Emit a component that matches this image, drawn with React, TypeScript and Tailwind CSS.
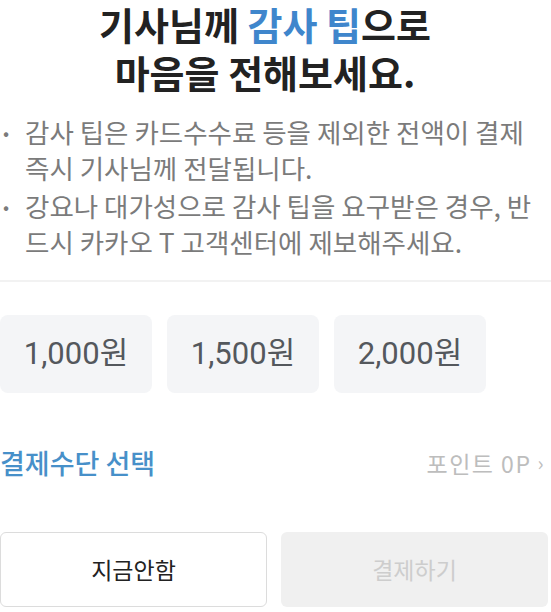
import React from "react";

export default function App() {
  return (
    <div className="w-[551px] h-[612px] bg-white overflow-hidden flex flex-col font-['Noto_Sans_CJK_KR',sans-serif]">
      {/* Title */}
      <div className="w-[530px] pt-[4px] text-center text-[38px] font-bold leading-[48px] text-[#222222] -mt-[4px]">
        <div>
          기사님께 <span className="text-[#3f86cc]">감사 팁</span>으로
        </div>
        <div>마음을 전해보세요.</div>
      </div>

      {/* Notes */}
      <div className="mt-[18px] pb-[20px] border-b-2 border-[#f2f2f2] flex flex-col gap-[2px] text-[26.5px] leading-[36px] text-[#7b7b7b]">
        <div className="flex">
          <span className="w-[25px] shrink-0 pl-[3px] text-[18px]">•</span>
          <span className="w-[515px]">감사 팁은 카드수수료 등을 제외한 전액이 결제 즉시 기사님께 전달됩니다.</span>
        </div>
        <div className="flex">
          <span className="w-[25px] shrink-0 pl-[3px] text-[18px]">•</span>
          <span className="w-[515px]">강요나 대가성으로 감사 팁을 요구받은 경우, 반드시 카카오 T 고객센터에 제보해주세요.</span>
        </div>
      </div>

      {/* Amount chips */}
      <div className="mt-[33px] flex gap-[15px]">
        {["1,000원", "1,500원", "2,000원"].map((a) => (
          <div
            key={a}
            className="w-[152px] h-[78px] rounded-[8px] bg-[#f4f5f7] flex items-center justify-center text-[31px] text-[#54585d] font-['Roboto','Noto_Sans_CJK_KR',sans-serif]"
          >
            {a}
          </div>
        ))}
      </div>

      {/* Payment method row */}
      <div className="mt-[50px] flex items-center justify-between pr-[6px]">
        <span className="text-[27px] font-medium text-[#4790c9]">결제수단 선택</span>
        <span className="flex items-center text-[23px] tracking-[1.5px] text-[#bdbdbd]">
          포인트 0P
          <span className="ml-[6px] text-[20px]">›</span>
        </span>
      </div>

      {/* Bottom buttons */}
      <div className="mt-[48px] flex gap-[14px]">
        <button className="w-[267px] h-[75px] rounded-[6px] border border-[#dcdcdc] bg-white text-[23px] text-[#222222]">
          지금안함
        </button>
        <button className="w-[267px] h-[75px] rounded-[6px] bg-[#f0f0f0] text-[23px] text-[#cdcdcd]">
          결제하기
        </button>
      </div>
    </div>
  );
}
